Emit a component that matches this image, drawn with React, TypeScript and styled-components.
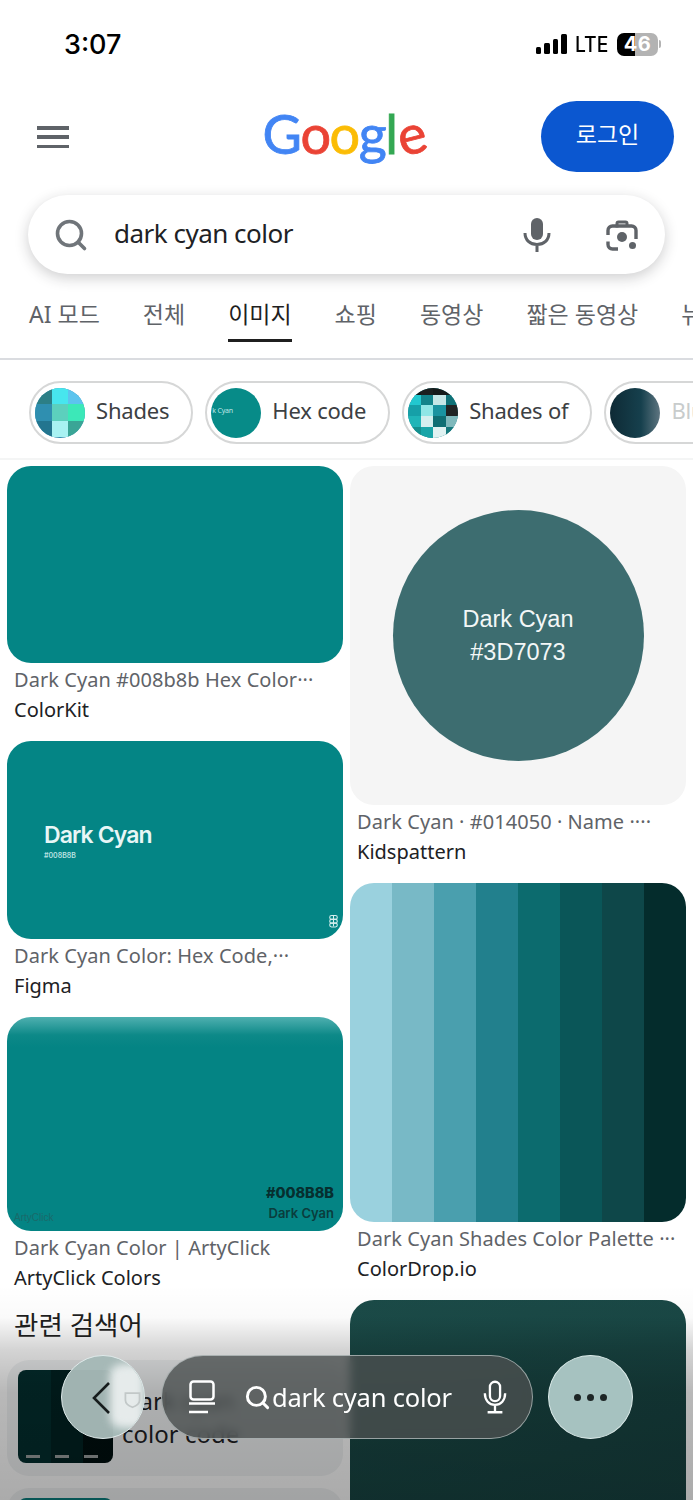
import styled, { createGlobalStyle } from "styled-components";
import { Search } from "lucide-react";

const GlobalStyle = createGlobalStyle`
  html, body {
    margin: 0;
    padding: 0;
    background: #fff;
  }
  * {
    box-sizing: border-box;
  }
`;

const FONT = `"Noto Sans", "Noto Sans CJK KR", sans-serif`;

const tabs = ["AI 모드", "전체", "이미지", "쇼핑", "동영상", "짧은 동영상", "뉴스"];

const shadeTiles = [
  "#2c7f86", "#47e6ee", "#5cc4ee",
  "#2f8fb0", "#5cd0bd", "#3ce8b8",
  "#23758f", "#a8f2f2", "#3aa596",
];

const paletteTiles = [
  "#151a1a", "#1b1f1f", "#151a1a", "#151a1a",
  "#22c8cf", "#12838a", "#c5e6e6", "#0f7177",
  "#16a0a8", "#8fe6e6", "#1a93a0", "#202424",
  "#1fb5b8", "#d4efef", "#0f6f74", "#7fb9bc",
  "#14908f", "#19a5a8", "#e0f2f2", "#15787c",
];

const stripes = [
  "#9ad1de", "#78b9c6", "#4a9fae", "#22808d",
  "#0c6b6e", "#0a5658", "#0e4749", "#042c2c",
];

export default function App() {
  return (
    <>
      <GlobalStyle />
      <Page>
        <StatusBar>
          <Clock>3:07</Clock>
          <StatusRight>
            <SignalBars>
              <Bar $h={7} />
              <Bar $h={11} />
              <Bar $h={15} />
              <Bar $h={20} />
            </SignalBars>
            <Lte>LTE</Lte>
            <Battery>
              <BatteryLevel>46</BatteryLevel>
            </Battery>
            <BatteryCap />
          </StatusRight>
        </StatusBar>

        <Header>
          <MenuIcon>
            <span />
            <span />
            <span />
          </MenuIcon>
          <LogoSlot>
            <Logo>
              <LogoLetter $color="#4285f4">G</LogoLetter>
              <LogoLetter $color="#ea4335">o</LogoLetter>
              <LogoLetter $color="#fbbc05">o</LogoLetter>
              <LogoLetter $color="#4285f4">g</LogoLetter>
              <LogoLetter $color="#34a853">l</LogoLetter>
              <LogoLetter $color="#ea4335" $tilt>
                e
              </LogoLetter>
            </Logo>
          </LogoSlot>
          <LoginButton>로그인</LoginButton>
        </Header>

        <SearchBox>
          <Search size={36} strokeWidth={2.4} color="#70757a" />
          <SearchText>dark cyan color</SearchText>
          <svg width="30" height="36" viewBox="0 0 30 36" fill="none">
            <rect x="9" y="1" width="12" height="22" rx="6" fill="#5f6368" />
            <path
              d="M3 16c0 7 5 11.5 12 11.5S27 23 27 16M15 27.5V35"
              stroke="#5f6368"
              strokeWidth="3"
            />
          </svg>
          <LensIcon width="34" height="34" viewBox="0 0 34 34" fill="none">
            <path
              d="M12 9.5V5.5c0-1 .8-1.5 1.5-1.5h7c.7 0 1.5.5 1.5 1.5v2"
              stroke="#5f6368"
              strokeWidth="3"
            />
            <path
              d="M13 31H7.5A4.5 4.5 0 0 1 3 26.500v-3M3 17v-4.500A4.500 4.500 0 0 1 7.500 8h19a4.500 4.500 0 0 1 4.500 4.500V21"
              stroke="#5f6368"
              strokeWidth="3.400"
            />
            <circle cx="17" cy="19" r="5" fill="#5f6368" />
            <circle cx="27.500" cy="27.500" r="3.500" fill="#5f6368" />
          </LensIcon>
        </SearchBox>

        <TabRow>
          {tabs.map((tab) => (
            <Tab key={tab} $active={tab === "이미지"}>
              {tab}
            </Tab>
          ))}
        </TabRow>

        <ChipRow>
          <Chip>
            <ChipThumb $bg="#2f8fb0">
              <TileGrid $cols={3} $rows="1fr 1fr 1fr">
                {shadeTiles.map((c, i) => (
                  <i key={i} style={{ background: c }} />
                ))}
              </TileGrid>
            </ChipThumb>
            <ChipLabel>Shades</ChipLabel>
          </Chip>
          <Chip>
            <ChipThumb $bg="#078b88">
              <TinyCyan>k Cyan</TinyCyan>
            </ChipThumb>
            <ChipLabel>Hex code</ChipLabel>
          </Chip>
          <Chip>
            <ChipThumb $bg="#0d7f86">
              <TileGrid $cols={4} $rows="7px 1fr 1fr 1fr 1fr">
                {paletteTiles.map((c, i) => (
                  <i key={i} style={{ background: c }} />
                ))}
              </TileGrid>
            </ChipThumb>
            <ChipLabel>Shades of</ChipLabel>
          </Chip>
          <Chip>
            <ChipThumb $bg="linear-gradient(90deg, #0e2a35 0%, #16404d 62%, #5e7580 100%)" />
            <FadedLabel>Blue</FadedLabel>
          </Chip>
        </ChipRow>

        <Results>
          <Column>
            <ResultCard>
              <ImageBox $h={197} />
              <Caption>Dark Cyan #008b8b Hex Color···</Caption>
              <Source>ColorKit</Source>
            </ResultCard>
            <ResultCard>
              <FigmaImage>
                <FigmaTitle>Dark Cyan</FigmaTitle>
                <FigmaHex>#008B8B</FigmaHex>
                <FigmaMark viewBox="0 0 8 12" fill="none">
                  <rect x="0.5" y="0.5" width="7" height="3.500" rx="1.700" stroke="#d5eeee" />
                  <rect x="0.5" y="4" width="7" height="3.500" rx="1.700" stroke="#d5eeee" />
                  <rect x="0.5" y="7.500" width="7" height="3.500" rx="1.700" stroke="#d5eeee" />
                  <path d="M4 .5v10" stroke="#d5eeee" />
                </FigmaMark>
              </FigmaImage>
              <Caption>Dark Cyan Color: Hex Code,···</Caption>
              <Source>Figma</Source>
            </ResultCard>
            <ResultCard>
              <ArtyImage>
                <ArtyWatermark>ArtyClick</ArtyWatermark>
                <ArtyLabels>
                  <ArtyHex>#008B8B</ArtyHex>
                  <ArtyName>Dark Cyan</ArtyName>
                </ArtyLabels>
              </ArtyImage>
              <Caption>Dark Cyan Color | ArtyClick</Caption>
              <Source>ArtyClick Colors</Source>
            </ResultCard>
            <RelatedTitle>관련 검색어</RelatedTitle>
            <RelatedCard>
              <RelatedThumb />
              <RelatedText>Dark cyan color code</RelatedText>
            </RelatedCard>
            <RelatedCard>
              <RelatedThumb $teal />
            </RelatedCard>
          </Column>

          <Column>
            <ResultCard>
              <CircleImage>
                <Circle>
                  Dark Cyan
                  <br />
                  #3D7073
                </Circle>
              </CircleImage>
              <Caption>Dark Cyan · #014050 · Name ····</Caption>
              <Source>Kidspattern</Source>
            </ResultCard>
            <ResultCard>
              <StripeImage>
                {stripes.map((c) => (
                  <i key={c} style={{ background: c }} />
                ))}
              </StripeImage>
              <Caption>Dark Cyan Shades Color Palette ···</Caption>
              <Source>ColorDrop.io</Source>
            </ResultCard>
            <DarkImage />
          </Column>
        </Results>

        <BottomFade />

        <FloatingBar>
          <BackButton>
            <BackShine />
            <ShieldGhost viewBox="0 0 24 26" fill="none">
              <path d="M2 4h20v10c0 5-5 8-10 10C7 22 2 19 2 14z" stroke="#c2c8c8" strokeWidth="2.500" />
            </ShieldGhost>
            <BackChevron width="20" height="34" viewBox="0 0 20 34" fill="none">
              <path d="M18 2 3 17l15 15" stroke="#171d1d" strokeWidth="2.600" />
            </BackChevron>
          </BackButton>
          <AddressPill>
            <svg width="28" height="34" viewBox="0 0 28 34" fill="none" stroke="#fff" strokeWidth="2.500">
              <rect x="2.500" y="1.500" width="23" height="18" rx="3" />
              <path d="M1 23.500h26M1 32h19" />
            </svg>
            <AddressQuery>
              <Search size={27} strokeWidth={2.600} color="#fff" />
              dark cyan color
            </AddressQuery>
            <svg width="24" height="36" viewBox="0 0 26 36" fill="none" stroke="#fff" strokeWidth="2.500">
              <rect x="7.500" y="1.500" width="11" height="21" rx="5.500" />
              <path d="M2 14c0 7.500 4.500 12.500 11 12.500S24 21.500 24 14M13 26.500V34M5 34.500h16" />
            </svg>
          </AddressPill>
          <MoreButton>
            <Dot />
            <Dot />
            <Dot />
          </MoreButton>
        </FloatingBar>
      </Page>
    </>
  );
}

const Page = styled.div`
  position: relative;
  width: 693px;
  height: 1500px;
  overflow: hidden;
  background: #fff;
  font-family: ${FONT};
`;

const StatusBar = styled.div`
  height: 88px;
  display: flex;
  align-items: center;
  justify-content: space-between;
  padding: 0 32px 0 64px;
`;

const Clock = styled.div`
  font-family: "Inter", sans-serif;
  font-size: 27px;
  font-weight: 500;
  color: #000;
`;

const StatusRight = styled.div`
  display: flex;
  align-items: center;
`;

const SignalBars = styled.div`
  display: flex;
  align-items: flex-end;
  gap: 3px;
  height: 20px;
`;

const Bar = styled.span<{ $h: number }>`
  width: 5.500px;
  height: ${(p) => p.$h}px;
  background: #000;
  border-radius: 1.500px;
`;

const Lte = styled.div`
  margin-left: 8px;
  font-family: "Inter", sans-serif;
  font-size: 21px;
  font-weight: 500;
  color: #000;
  transform: scaleX(0.92);
  transform-origin: left center;
`;

const Battery = styled.div`
  margin-left: 6px;
  width: 41px;
  height: 23px;
  border-radius: 7px;
  background: linear-gradient(90deg, #000 0 44%, #b3b3b3 44% 100%);
  display: flex;
  align-items: center;
  justify-content: center;
`;

const BatteryLevel = styled.span`
  font-family: "Inter", sans-serif;
  font-size: 20px;
  font-weight: 700;
  color: #fff;
  letter-spacing: 0.500px;
`;

const BatteryCap = styled.span`
  width: 2px;
  height: 8px;
  margin-left: 1px;
  border-radius: 0 2px 2px 0;
  background: #b3b3b3;
`;

const Header = styled.div`
  height: 107px;
  display: flex;
  align-items: flex-start;
  padding: 13px 19px 0 37px;
`;

const MenuIcon = styled.div`
  width: 32px;
  height: 22px;
  margin-top: 25px;
  display: flex;
  flex-direction: column;
  justify-content: space-between;
  span {
    display: block;
    height: 3.500px;
    background: #5f6368;
  }
`;

const LogoSlot = styled.div`
  flex: 1;
  display: flex;
  justify-content: center;
  padding-left: 76px;
  margin-top: -3px;
`;

const Logo = styled.div`
  display: flex;
  align-items: baseline;
  height: 72px;
  font-family: "Lato", sans-serif;
  font-size: 54px;
  line-height: 72px;
  font-weight: 400;
  letter-spacing: -1.500px;
  -webkit-text-stroke: 0.800px currentColor;
`;

const LogoLetter = styled.span<{ $color: string; $tilt?: boolean }>`
  display: inline-block;
  color: ${(p) => p.$color};
  transform: ${(p) => (p.$tilt ? "rotate(-14deg)" : "none")};
`;

const LoginButton = styled.div`
  width: 133px;
  height: 71px;
  border-radius: 36px;
  background: #0b57d0;
  color: #fff;
  font-size: 23px;
  display: flex;
  align-items: center;
  justify-content: center;
  padding-bottom: 7px;
`;

const SearchBox = styled.div`
  width: 637px;
  height: 79px;
  margin-left: 28px;
  border-radius: 40px;
  background: #fff;
  box-shadow: 0 4px 14px rgba(32, 33, 36, 0.22);
  display: flex;
  align-items: center;
  padding: 0 26px 0 25px;
`;

const SearchText = styled.div`
  flex: 1;
  margin-left: 25px;
  padding-bottom: 4px;
  font-size: 26px;
  letter-spacing: -0.500px;
  color: #202124;
`;

const LensIcon = styled.svg`
  margin-left: 53px;
`;

const TabRow = styled.div`
  height: 86px;
  display: flex;
  gap: 43px;
  padding: 24px 0 0 29px;
  border-bottom: 2px solid #dadce0;
  overflow: hidden;
  white-space: nowrap;
`;

const Tab = styled.div<{ $active?: boolean }>`
  flex-shrink: 0;
  height: 44px;
  font-size: 23px;
  line-height: 32px;
  color: ${(p) => (p.$active ? "#1f1f1f" : "#5f6368")};
  border-bottom: ${(p) => (p.$active ? "3.500px solid #1f1f1f" : "none")};
`;

const ChipRow = styled.div`
  height: 100px;
  display: flex;
  gap: 12px;
  padding: 21px 0 0 29px;
  border-bottom: 2px solid #f4f5f5;
  overflow: hidden;
`;

const Chip = styled.div`
  flex-shrink: 0;
  height: 63px;
  display: flex;
  align-items: center;
  gap: 11px;
  padding: 0 22px 0 4px;
  border: 2px solid #d6d7d7;
  border-radius: 32px;
  font-size: 22px;
  letter-spacing: -0.200px;
  color: #3c4043;
  background: #fff;
`;

const ChipLabel = styled.span`
  padding-bottom: 6px;
`;

const ChipThumb = styled.div<{ $bg: string }>`
  position: relative;
  width: 50px;
  height: 50px;
  border-radius: 50%;
  overflow: hidden;
  background: ${(p) => p.$bg};
`;

const TileGrid = styled.div<{ $cols: number; $rows: string }>`
  display: grid;
  grid-template-columns: repeat(${(p) => p.$cols}, 1fr);
  grid-template-rows: ${(p) => p.$rows};
  height: 100%;
  filter: blur(0.700px);
  i {
    display: block;
  }
`;

const TinyCyan = styled.span`
  display: block;
  padding: 18px 0 0 1px;
  font-size: 7px;
  line-height: 10px;
  color: #bfe6e6;
`;

const FadedLabel = styled(ChipLabel)`
  color: #c8cccc;
  width: 90px;
`;

const Results = styled.div`
  display: flex;
  gap: 7px;
  padding: 6px 7px 0;
`;

const Column = styled.div`
  width: 336px;
  display: flex;
  flex-direction: column;
`;

const ResultCard = styled.div`
  margin-bottom: 16px;
`;

const ImageBox = styled.div<{ $h: number }>`
  height: ${(p) => p.$h}px;
  border-radius: 24px;
  background: #048585;
`;

const Caption = styled.div`
  margin: 2px 7px 0;
  height: 30px;
  font-size: 20px;
  line-height: 30px;
  letter-spacing: 0.050px;
  color: #5f6368;
  white-space: nowrap;
`;

const Source = styled.div`
  margin: 0 7px;
  height: 30px;
  font-size: 20px;
  line-height: 30px;
  color: #202124;
  white-space: nowrap;
`;

const FigmaImage = styled.div`
  position: relative;
  height: 198px;
  border-radius: 24px;
  background: #048585;
  padding: 78px 0 0 37px;
`;

const FigmaTitle = styled.div`
  font-family: "Inter", sans-serif;
  font-size: 23px;
  line-height: 32px;
  font-weight: 600;
  letter-spacing: -0.900px;
  color: #e8f6f6;
`;

const FigmaHex = styled.div`
  font-family: "Inter", sans-serif;
  font-size: 7px;
  line-height: 10px;
  font-weight: 600;
  color: #b9e2e2;
`;

const FigmaMark = styled.svg`
  position: absolute;
  right: 5px;
  bottom: 11px;
  width: 9px;
  height: 13px;
`;

const ArtyImage = styled.div`
  position: relative;
  height: 214px;
  border-radius: 24px;
  background: linear-gradient(180deg, #4fb0b0 0, #0d8988 18px, #048484 30px);
`;

const ArtyWatermark = styled.span`
  position: absolute;
  left: 7px;
  bottom: 7px;
  font-family: "Liberation Sans", sans-serif;
  font-size: 10px;
  line-height: 12px;
  color: #1a6a6a;
`;

const ArtyLabels = styled.div`
  position: absolute;
  right: 9px;
  bottom: 8px;
  text-align: right;
  font-family: "Inter", sans-serif;
`;

const ArtyHex = styled.div`
  font-size: 14.500px;
  line-height: 20px;
  font-weight: 800;
  color: #062f2f;
`;

const ArtyName = styled.div`
  font-size: 13px;
  line-height: 20px;
  font-weight: 600;
  color: #0a3d3d;
`;

const RelatedTitle = styled.div`
  margin: -6px 0 0 7px;
  height: 44px;
  font-size: 26.500px;
  line-height: 44px;
  color: #1f1f1f;
`;

const RelatedCard = styled.div`
  flex-shrink: 0;
  height: 116px;
  margin-top: 13px;
  margin-bottom: -1px;
  border-radius: 22px;
  background: #f1f3f4;
  display: flex;
  padding: 10px 11px;
  gap: 9px;
`;

const RelatedThumb = styled.div<{ $teal?: boolean }>`
  position: relative;
  flex-shrink: 0;
  width: 95px;
  height: 93px;
  border-radius: 8px;
  overflow: hidden;
  background: ${(p) =>
    p.$teal
      ? "#0a7f7e"
      : "linear-gradient(90deg, #032e2e 0 35%, #012222 35% 68%, #000f0f 68% 100%)"};
  &::after {
    content: "";
    position: absolute;
    left: 8px;
    right: 8px;
    bottom: 5px;
    height: 3px;
    display: ${(p) => (p.$teal ? "none" : "block")};
    background: repeating-linear-gradient(90deg, #9a9f9f 0 14px, transparent 14px 29px);
  }
`;

const RelatedText = styled.div`
  padding-top: 14px;
  width: 150px;
  font-size: 24px;
  line-height: 33px;
  color: #202124;
`;

const CircleImage = styled.div`
  height: 339px;
  border-radius: 24px;
  background: #f5f5f5;
  display: flex;
  align-items: flex-start;
  justify-content: center;
  padding-top: 44px;
`;

const Circle = styled.div`
  width: 251px;
  height: 251px;
  border-radius: 50%;
  background: #3d6d70;
  padding-top: 93px;
  text-align: center;
  font-family: "Liberation Sans", sans-serif;
  font-size: 23.500px;
  line-height: 33px;
  color: #f3f7f7;
`;

const StripeImage = styled.div`
  height: 339px;
  border-radius: 24px;
  overflow: hidden;
  display: grid;
  grid-template-columns: repeat(8, 1fr);
  i {
    display: block;
  }
`;

const DarkImage = styled.div`
  height: 340px;
  border-radius: 24px;
  background: linear-gradient(160deg, #1b4b48 0%, #184543 50%, #163f3e 100%);
`;

const BottomFade = styled.div`
  position: absolute;
  left: 0;
  right: 0;
  bottom: 0;
  height: 215px;
  pointer-events: none;
  background: linear-gradient(
    180deg,
    rgba(0, 0, 0, 0) 0%,
    rgba(0, 0, 0, 0.02) 15%,
    rgba(0, 0, 0, 0.17) 30%,
    rgba(0, 0, 0, 0.28) 50%,
    rgba(0, 0, 0, 0.33) 100%
  );
`;

const FloatingBar = styled.div`
  position: absolute;
  left: 61px;
  top: 1355px;
  display: flex;
  align-items: center;
  gap: 16px;
`;

const BackButton = styled.div`
  position: relative;
  width: 84px;
  height: 84px;
  border-radius: 50%;
  overflow: hidden;
  border: 1.500px solid #dfeaea;
  background: rgba(165, 185, 183, 0.97);
`;

const BackShine = styled.div`
  position: absolute;
  left: 48px;
  top: 8px;
  width: 34px;
  height: 64px;
  border-radius: 12px 0 0 12px;
  background: #e6ebeb;
  filter: blur(4px);
`;

const BackChevron = styled.svg`
  position: absolute;
  left: 29px;
  top: 25px;
`;

const ShieldGhost = styled.svg`
  position: absolute;
  left: 62px;
  top: 33px;
  width: 17px;
  height: 21px;
`;

const AddressPill = styled.div`
  width: 372px;
  height: 84px;
  border-radius: 42px;
  border: 1.500px solid rgba(225, 235, 235, 0.55);
  background: rgba(75, 80, 80, 0.8);
  backdrop-filter: blur(5px);
  display: flex;
  align-items: center;
  padding: 0 25px 0 26px;
  color: #fff;
`;

const AddressQuery = styled.div`
  flex: 1;
  display: flex;
  align-items: center;
  gap: 1px;
  margin-left: 28px;
  font-size: 25.500px;
  letter-spacing: -0.200px;
  color: #fff;
`;

const MoreButton = styled.div`
  width: 85px;
  height: 84px;
  border-radius: 50%;
  border: 1.500px solid #dcebea;
  background: #a6c2c0;
  display: flex;
  align-items: center;
  justify-content: center;
  gap: 6px;
  margin-left: -1px;
`;

const Dot = styled.span`
  width: 7px;
  height: 7px;
  border-radius: 50%;
  background: #1d2525;
`;
